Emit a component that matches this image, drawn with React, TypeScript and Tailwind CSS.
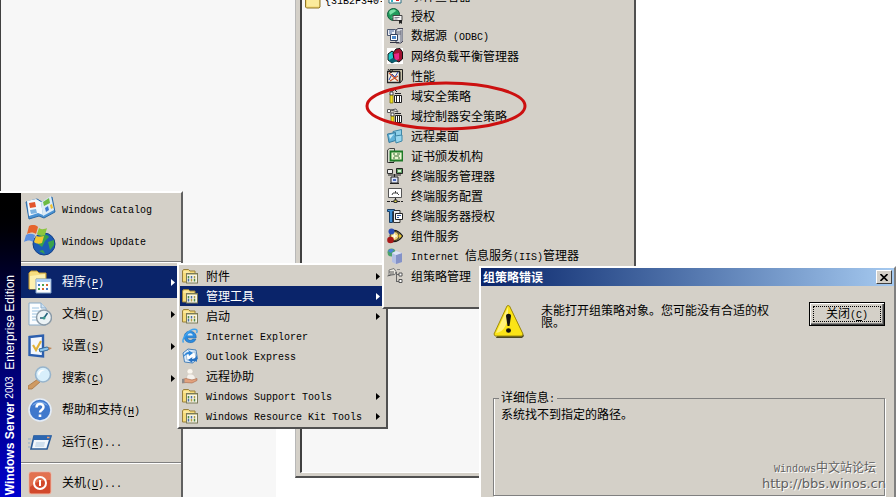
import React from 'react';

type IconProps = { children: React.ReactNode; className?: string; box?: number };

const Svg = ({ children, className = 'h-4 w-4', box = 16 }: IconProps) => (
  <svg viewBox={`0 0 ${box} ${box}`} className={`${className} shrink-0`} aria-hidden="true">
    {children}
  </svg>
);

// Latin runs use a half-width mono face, a single letter in brackets is the access key
const Label = ({ text }: { text: string }) => (
  <>
    {text.split(/([\x20-\x7e]+)/).map((part, i) => {
      if (!/^[\x20-\x7e]+$/.test(part)) return <React.Fragment key={i}>{part}</React.Fragment>;
      const key = part.match(/^\((\w)\)(.*)$/);
      return (
        <span key={i} className="font-['Liberation_Mono',monospace] text-[10px]">
          {key ? <>(<u className="underline-offset-2">{key[1]}</u>){key[2]}</> : part}
        </span>
      );
    })}
  </>
);

const Arrow = () => (
  <svg viewBox="0 0 4 7" className="ml-auto h-[7px] w-1 shrink-0 fill-current" aria-hidden="true">
    <path d="M0 0L4 3.5L0 7z" />
  </svg>
);

/* ---------- small icons ---------- */

const ProgramGroup = () => (
  <Svg>
    <path d="M.5 14V3l1-1.5h5L8 3h5v11z" fill="#f6dc7c" stroke="#98803c" />
    <path d="M1.5 4h5l2 2" fill="none" stroke="#fff6c4" />
    <rect x="4.5" y="5.500" width="11" height="9.500" fill="#f6f4e8" stroke="#7b7a58" />
    <path d="M5 6.500h10" stroke="#c9c494" />
    <path d="M6.500 8v2.500M12.500 11v2.500" stroke="#4d8a46" strokeWidth="1.500" />
    <path d="M9.500 8v2.500M6.500 11v2.500" stroke="#4c6fa0" strokeWidth="1.500" />
    <path d="M12.500 8v2.500M9.500 11v2.500" stroke="#b49a42" strokeWidth="1.500" />
  </Svg>
);

const Folder = () => (
  <Svg>
    <path d="M.5 14V3l1-1.500h5L8 3h7v11l-1 1H1.500z" fill="#f3d873" stroke="#8f7628" />
    <path d="M2 5.500h12v8H2z" fill="#fbeb9c" />
  </Svg>
);

const Explorer = () => (
  <Svg>
    <path d="M14.200 9.800H5.400c.3 3 4.400 3.200 5.300 1.200h3.200C12.500 16.400 2.300 16 2.300 8.800 2.300 1 14.700 1.200 14.200 9.800z" fill="#2b8ce0" stroke="#1462ad" strokeWidth=".6" />
    <path d="M5.500 7.500h5.300C10.500 4.600 5.900 4.600 5.500 7.500z" fill="#d4e8f8" />
    <path d="M1.500 14.500C-1 11 8-.5 14 1.500c1.500.6 1.200 2.300.5 3.500" fill="none" stroke="#3da2ee" strokeWidth="1.400" />
  </Svg>
);

const Outlook = () => (
  <Svg>
    <path d="M1 5l5-4 8 1 1.500 9-5 4-8-1z" fill="#dcebfa" stroke="#4a82b8" />
    <path d="M4 5l9-1 1 7-9 1z" fill="#fff" stroke="#7fa9d0" strokeWidth=".7" />
    <path d="M1 2v7c2-4 4-5 6-5l-1-2 5 3-4 3-.5-2C4 6.500 3 8 1 9" fill="#2f86d8" />
    <path d="M15 14V7c-1.500 3-3 4-5 4l.5-2L6 12l4.500 3-.2-2c2 0 3.500-.5 4.700 1z" fill="#2873c4" />
  </Svg>
);

const Assist = () => (
  <Svg>
    <circle cx="8" cy="3.500" r="3" fill="#fbf7f0" stroke="#cfc6ba" strokeWidth=".6" />
    <path d="M4.500 12c0-6 1.500-6 4-6s5 1 5 6z" fill="#f4f1ec" stroke="#c7beb2" strokeWidth=".6" />
    <path d="M0 11.500l4-1 6 1.500 5-1.500v2L10 15l-6-.5-4 .5z" fill="#e2a27e" stroke="#a8664a" strokeWidth=".6" />
    <path d="M0 11h2.500v4H0z" fill="#8e8b8b" />
  </Svg>
);

const EventViewer = () => (
  <Svg>
    <path d="M2 1h12v14H2z" fill="#fff" stroke="#2f6f80" />
    <path d="M4 8h2v2H4zM4 12h2v2H4z" fill="#30b0c0" />
    <path d="M9 10h3v3H9z" fill="#d02020" />
    <path d="M3 4h10" stroke="#405070" />
  </Svg>
);

const Licensing = () => (
  <Svg>
    <circle cx="6.500" cy="6.500" r="6" fill="#219a5c" stroke="#0e5c3a" />
    <path d="M2 4c2-3 6-3 7-1L6 5 3 7zM4 9l3-1 1 3z" fill="#7be0a8" />
    <path d="M6 7.500h9v5H6z" fill="#f4f4f4" stroke="#444" />
    <path d="M7.500 9.500h5M7.500 11h3" stroke="#667" strokeWidth=".8" />
    <path d="M12 12h3v4l-1.500-1L12 16z" fill="#222" />
  </Svg>
);

const DataSource = () => (
  <Svg>
    <path d="M9 2l2-1.500h5V13l-2 2H9z" fill="#d6dbe2" stroke="#445" />
    <path d="M10 4h4M10 6h4M14 2v12" stroke="#667" />
    <path d="M.5 1.500h8v6h-8z" fill="#eceef3" stroke="#4c5870" />
    <path d="M2 3h5M2 5h3" stroke="#4b689c" />
    <path d="M3.500 6.500h7v6h-7z" fill="#fff" stroke="#34425e" />
    <path d="M5 8h4v3H5z" fill="#4b86c8" />
    <path d="M3 14.500h9" stroke="#334" />
  </Svg>
);

const LoadBalance = () => (
  <Svg>
    <path d="M0 0h16v16H0z" fill="#fff" />
    <path d="M1 6l4-3 4 3v6l-4 3-4-3z" fill="#20c8c8" stroke="#111" />
    <path d="M6 5l3-4 4-.5L15.500 4v7L12 14 7 12z" fill="#a01030" stroke="#111" />
    <path d="M7 6l5-1v6l-4 2z" fill="#e82888" />
    <path d="M2 12l4-2 5 3-6 2z" fill="#0a5f70" />
  </Svg>
);

const Performance = () => (
  <Svg>
    <path d="M3 1.500h12.500V12L13 15V4H3z" fill="#c9c4ac" stroke="#222" />
    <path d="M.5 3.500h12v11H.5z" fill="#f7f2e4" stroke="#222" strokeWidth="1.300" />
    <path d="M2 12l3-6 3 3 3-5" fill="none" stroke="#2747b0" />
    <path d="M2 5l9 8M3 13l8-5" stroke="#c8522a" strokeWidth="1.200" />
    <path d="M1 1l3 4 2-4" stroke="#222" fill="none" />
  </Svg>
);

const DomainPolicy = () => (
  <Svg>
    <path d="M3 3h3l1-2 3 3" fill="none" stroke="#222" />
    <path d="M3 6.500h3V15H3z" fill="#f0e020" stroke="#7d7410" strokeWidth=".8" />
    <path d="M3 4h3v3H3z" fill="#fff" stroke="#222" strokeWidth=".8" />
    <path d="M7.500 7.500h7v7h-7z" fill="#fff" stroke="#222" />
    <path d="M9.500 8v6M12.500 8v6M8 5.500h6" stroke="#222" />
  </Svg>
);

const ControllerPolicy = () => (
  <Svg>
    <path d="M.5 1.500h3v3h-3zM4 2l5-1 2 3z" fill="#fff" stroke="#555" />
    <path d="M4 7.500h3V15H4z" fill="#f0e020" stroke="#7d7410" strokeWidth=".8" />
    <path d="M4 5h3v3H4z" fill="#fff" stroke="#222" strokeWidth=".8" />
    <path d="M8.500 7.500h6v7h-6z" fill="#fff" stroke="#222" />
    <path d="M10.500 8v6M12.500 8v6M8 5.500h6" stroke="#222" />
  </Svg>
);

const RemoteDesktop = () => (
  <Svg>
    <path d="M6 3.500L14.500 1.500v8L7 11z" fill="#8fd0e8" stroke="#3d87a8" />
    <path d="M.5 6l8-1.500v8L2 14.500z" fill="#62b2d8" stroke="#357b9f" />
    <path d="M8 8l7-1v6l-6 2z" fill="#98d6ee" stroke="#3d87a8" />
    <path d="M2 7l5-1-4 5z" fill="#c4ecf8" />
  </Svg>
);

const CertAuthority = () => (
  <Svg>
    <path d="M.5 2l2-1.500h5V13L6 14.500H.5z" fill="#d9ddd0" stroke="#444" />
    <path d="M3.500 3.500h12v9h-12z" fill="#e9f6cf" stroke="#1d7a26" strokeWidth="1.800" />
    <path d="M6 6h2M10 6h3M7 8h5M6 10h2M11 10h2" stroke="#386c36" />
    <path d="M2 14.500h5" stroke="#222" />
  </Svg>
);

const TerminalManager = () => (
  <Svg>
    <path d="M.5 1.500h5v4h-5z" fill="#eee" stroke="#333" />
    <path d="M9.500 .5h6v5h-6z" fill="#5d9e62" stroke="#222" />
    <path d="M11 2h3v2h-3z" fill="#d6f0d2" />
    <path d="M4 9h7v6H4z" fill="#dce3f7" stroke="#222" />
    <path d="M6 11h3v2H6z" fill="#4a68b8" />
    <path d="M7.500 9V6M1 7h13M3 15.500h9" stroke="#222" />
  </Svg>
);

const TerminalConfig = () => (
  <Svg>
    <path d="M1.500 .5h13v9h-13z" fill="#fff" stroke="#555" />
    <path d="M5 7l1-2M8.500 3v2M10 5l2 2M6 5h5" stroke="#444" />
    <path d="M8.500 10v3M0 13.500h3M4 13.500h9M14 13.500h2" stroke="#222" />
    <path d="M7 12h3v2.500H7z" fill="#e2d84a" stroke="#333" />
  </Svg>
);

const TerminalLicense = () => (
  <Svg>
    <path d="M.5 1.500h7v2h-2v11h-3v-11h-2z" fill="#3e8fd2" stroke="#173d66" />
    <path d="M7 2.500h6v12H6.500v-11z" fill="#e8ebf0" stroke="#333" />
    <path d="M8.500 5.500h7v6h-7z" fill="#fff" stroke="#222" />
    <path d="M10 7.500h4M10 9.500h2" stroke="#385a94" />
  </Svg>
);

const ComponentServices = () => (
  <Svg>
    <path d="M5 2.500c5-1 8 2 10.500 5.500C13 12 10 14 5 13.500z" fill="#c8b878" stroke="#1a1a1a" strokeWidth="1.300" />
    <circle cx="7.500" cy="8" r="4.500" fill="#e8cc70" stroke="#2a2410" />
    <circle cx="4.500" cy="3.500" r="3" fill="#2a4cb4" />
    <circle cx="3.500" cy="12" r="3.300" fill="#a81818" />
    <path d="M5 8h5M7.500 5.500v5" stroke="#fffbe0" strokeWidth="1.600" />
    <circle cx="13" cy="8" r="1.500" fill="#e6c430" />
  </Svg>
);

const IisManager = () => (
  <Svg>
    <circle cx="4.500" cy="4.500" r="4" fill="#4aa26c" />
    <path d="M1 3c2-3 5-2 6-1L4 5z" fill="#4c82d8" />
    <path d="M5 5l4-2 6 2v9l-6 2-4-2z" fill="#b4c0e4" />
    <path d="M9 7l6-2v9l-6 2z" fill="#8492c8" />
    <path d="M5 5l4-2 6 2-6 2z" fill="#dde4f6" />
  </Svg>
);

const GroupPolicy = () => (
  <Svg>
    <path d="M2 2l5-1.500 2 3-1 3-6 1z" fill="#eceae2" stroke="#777" />
    <path d="M2 4h5M3 6h4M.5 8l3-1" stroke="#555" />
    <path d="M9.500 4v10M9.500 6.500h3M9.500 13.500h3" stroke="#666" fill="none" />
    <path d="M12 5h3v3h-3zM12 11.500h3v3h-3z" fill="#fff" stroke="#555" />
    <path d="M10 1.500h3" stroke="#888" />
  </Svg>
);

/* ---------- start menu icons ---------- */

const Catalog = () => (
  <Svg box={32} className="h-8 w-8">
    <path d="M2 9l11-3 5 3 10-5 3 15-11 6-5-2-10 3z" fill="#4c94d4" stroke="#2c6aa6" />
    <path d="M3 8l9-2 5 3 2 13-5-2-9 3z" fill="#f2f8fd" />
    <path d="M17 9l10-6 3 14-11 6z" fill="#dcebf6" />
    <path d="M5 10l6-1 1 5-6 1z" fill="#e2552e" />
    <path d="M6 17l6-1 1 4-6 1z" fill="#7db3e0" />
    <path d="M19 9l6-4 1 5-6 3z" fill="#6cbb45" />
    <path d="M21 15l3-2 1 4-3 2z" fill="#3c78d0" />
    <path d="M26 12l2-1 1 4-2 1z" fill="#f0c030" />
  </Svg>
);

const Update = () => (
  <Svg box={32} className="h-8 w-8">
    <circle cx="20" cy="19" r="11" fill="#1c5cb4" stroke="#123f86" />
    <path d="M14 13c4-4 9-4 11-1l-4 4-3 6-4-3zM24 17l6-2v5l-4 5zM15 26l4-1 2 4z" fill="#39a24a" />
    <path d="M5 1c4-2 7-1 9 1l-2 7C9 7 7 7 3 9z" fill="#e6642c" />
    <path d="M15 3c3 2 6 1 8 0l-2 7c-3 1-6 1-8-1z" fill="#8cc63e" />
    <path d="M2 10c3-2 6-1 9 0l-2 7c-3-2-5-2-9 0z" fill="#5a8ee0" />
    <path d="M12 11c3 1 5 1 8 0l-2 7c-3 1-6 1-8-1z" fill="#f4c832" />
  </Svg>
);

const Programs = () => (
  <Svg box={24} className="h-6 w-6">
    <path d="M1 19V3l2-2h6l2 2h7v16z" fill="#f7dd80" stroke="#c19a36" />
    <path d="M2 6l8-1 7-1v4H8v11H2z" fill="#fdf0b0" />
    <path d="M8 9h15v14H8z" fill="#fbfcfe" stroke="#7d9ec6" />
    <path d="M8.500 9h14v3h-14z" fill="#a9cdf4" />
    <path d="M10 14h2v2h-2zM18 18h2v2h-2z" fill="#3e78c4" />
    <path d="M14 14h2v2h-2zM10 18h2v2h-2z" fill="#48a04e" />
    <path d="M18 14h2v2h-2zM14 18h2v2h-2z" fill="#d6642e" />
  </Svg>
);

const Documents = () => (
  <Svg box={24} className="h-6 w-6">
    <path d="M1 1h12l5 5v17H1z" fill="#fbfdff" stroke="#88abc9" />
    <path d="M13 1v5h5" fill="#cfe2f2" stroke="#88abc9" />
    <path d="M4 6h7M4 9h10M4 12h6M4 15h4M4 18h4" stroke="#9cc3e2" />
    <circle cx="16" cy="15.500" r="7.500" fill="#ecf3f6" stroke="#8b9ba8" strokeWidth="1.500" />
    <path d="M19.500 11L16 16h-4" fill="none" stroke="#23607c" strokeWidth="1.600" />
    <circle cx="16" cy="16" r="1.500" fill="#3c9a8c" />
  </Svg>
);

const Settings = () => (
  <Svg box={24} className="h-6 w-6">
    <path d="M1.500 3L15 1.500v21L1.500 21z" fill="#f4f8fe" stroke="#2c5fae" strokeWidth="2.400" />
    <path d="M5 11l3 5 5-9" fill="none" stroke="#e2b33a" strokeWidth="2.200" />
    <path d="M11 15l8-2 2 1-1 2-8 2z" fill="#8cc4ec" stroke="#346a9c" />
    <path d="M20 13l4 1-3 2z" fill="#c08452" />
  </Svg>
);

const Search = () => (
  <Svg box={24} className="h-6 w-6">
    <path d="M10 13l2 3-8 7H0v-3z" fill="#cf9a62" stroke="#a67544" strokeWidth=".8" />
    <circle cx="15" cy="8.500" r="7.500" fill="#d8effb" stroke="#97b4cc" strokeWidth="1.600" />
    <path d="M10 8c0-4 5-5 7-4-4 1-5 3-6 6z" fill="#fff" />
  </Svg>
);

const Help = () => (
  <Svg box={24} className="h-6 w-6">
    <circle cx="12" cy="12" r="11" fill="#3f78cc" stroke="#e4edf8" strokeWidth="1.600" />
    <path d="M4 8c3-6 13-6 16 0-5-3-11-3-16 0z" fill="#79a8e6" />
    <path d="M8.500 9.500C8.500 5 15.500 5 15.500 9c0 3-3.500 3-3.500 5.500" fill="none" stroke="#fff" strokeWidth="2.500" />
    <path d="M10.700 16.500h2.600V19h-2.600z" fill="#fff" />
  </Svg>
);

const Run = () => (
  <Svg box={24} className="h-6 w-6">
    <path d="M6 6h17l-4 13H3z" fill="#f2f7fb" stroke="#2a5c98" strokeWidth="1.600" />
    <path d="M6 5.500h17.500L22 10H5z" fill="#2c66b0" />
    <path d="M19 7.500h2.500" stroke="#f0a070" strokeWidth="1.500" />
    <path d="M0 9h3M0 13h2M0 17h2" stroke="#8cabc9" />
    <path d="M8 12h9l-1 5H7z" fill="#cfe0ee" />
  </Svg>
);

const Shutdown = () => (
  <Svg box={24} className="h-6 w-6">
    <rect x="1" y="1" width="22" height="22" rx="2" fill="#d2492c" stroke="#f2b8a4" />
    <path d="M2 2h20v7C14 9 8 11 2 16z" fill="#e2714f" />
    <circle cx="12" cy="12" r="6" fill="none" stroke="#fff" strokeWidth="2" />
    <path d="M12 9v6" stroke="#fff" strokeWidth="2" />
  </Svg>
);

/* ---------- data ---------- */

type Item = { icon: React.ReactNode; text: string; sub?: boolean; active?: boolean };

const adminTools: Item[] = [
  { icon: <EventViewer />, text: '事件查看器' },
  { icon: <Licensing />, text: '授权' },
  { icon: <DataSource />, text: '数据源 (ODBC)' },
  { icon: <LoadBalance />, text: '网络负载平衡管理器' },
  { icon: <Performance />, text: '性能' },
  { icon: <DomainPolicy />, text: '域安全策略' },
  { icon: <ControllerPolicy />, text: '域控制器安全策略' },
  { icon: <RemoteDesktop />, text: '远程桌面' },
  { icon: <CertAuthority />, text: '证书颁发机构' },
  { icon: <TerminalManager />, text: '终端服务管理器' },
  { icon: <TerminalConfig />, text: '终端服务配置' },
  { icon: <TerminalLicense />, text: '终端服务器授权' },
  { icon: <ComponentServices />, text: '组件服务' },
  { icon: <IisManager />, text: 'Internet 信息服务(IIS)管理器' },
  { icon: <GroupPolicy />, text: '组策略管理' },
];

const programs: Item[] = [
  { icon: <ProgramGroup />, text: '附件', sub: true },
  { icon: <ProgramGroup />, text: '管理工具', sub: true, active: true },
  { icon: <ProgramGroup />, text: '启动', sub: true },
  { icon: <Explorer />, text: 'Internet Explorer' },
  { icon: <Outlook />, text: 'Outlook Express' },
  { icon: <Assist />, text: '远程协助' },
  { icon: <ProgramGroup />, text: 'Windows Support Tools', sub: true },
  { icon: <ProgramGroup />, text: 'Windows Resource Kit Tools', sub: true },
];

const startGroups: Item[][] = [
  [
    { icon: <Catalog />, text: 'Windows Catalog' },
    { icon: <Update />, text: 'Windows Update' },
  ],
  [
    { icon: <Programs />, text: '程序(P)', sub: true, active: true },
    { icon: <Documents />, text: '文档(D)', sub: true },
    { icon: <Settings />, text: '设置(S)', sub: true },
    { icon: <Search />, text: '搜索(C)', sub: true },
    { icon: <Help />, text: '帮助和支持(H)' },
    { icon: <Run />, text: '运行(R)...' },
  ],
  [{ icon: <Shutdown />, text: '关机(U)...' }],
];

/* ---------- menus ---------- */

const Menu = ({ items, className }: { items: Item[]; className: string }) => (
  <ul
    className={`absolute border-2 border-t-white border-l-white border-r-[#505050] border-b-[#505050] bg-[#d4d0c8] p-px ${className}`}
  >
    {items.map((item) => (
      <li key={item.text}>
        <button
          className={`flex h-5 w-full items-center gap-2 pr-[5px] pl-[2px] text-left ${
            item.active ? 'bg-[#0a246a] text-white' : ''
          }`}
        >
          {item.icon}
          <span><Label text={item.text} /></span>
          {item.sub && <Arrow />}
        </button>
      </li>
    ))}
  </ul>
);

const StartMenu = () => (
  <nav className="absolute top-[191px] left-0 flex w-[183px] border-t-2 border-r-2 border-t-white border-r-[#606060] bg-[#d4d0c8]">
    <div className="flex w-[21px] items-center bg-linear-to-b from-black via-[#000050] via-40% to-[#0000d0]">
      <p className="mt-auto mb-1 w-[21px] rotate-180 font-['Liberation_Sans',sans-serif] text-[12px] leading-5 text-white [writing-mode:vertical-rl]">
        <b>Windows Server</b> <span className="text-[10px]">2003</span>{'  '}Enterprise Edition
      </p>
    </div>
    <div className="min-w-0 flex-1">
      {startGroups.map((group, i) => (
        <ul key={i} className={i > 0 ? 'mt-1 border-t border-[#808080] pt-1 shadow-[inset_0_1px_0_#fff]' : ''}>
          {group.map((item) => (
            <li key={item.text}>
              <button
                className={`flex h-8 w-full items-center pr-[6px] text-left ${
                  item.active ? 'bg-[#0a246a] text-white' : ''
                }`}
              >
                <span className="mr-1 flex w-[37px] shrink-0 justify-center">{item.icon}</span>
                <span><Label text={item.text} /></span>
                {item.sub && <Arrow />}
              </button>
            </li>
          ))}
        </ul>
      ))}
    </div>
  </nav>
);

const ErrorDialog = () => (
  <section
    role="dialog"
    aria-label="组策略错误"
    className="absolute top-[266px] right-0 -bottom-3 left-[479px] flex flex-col border-2 border-t-white border-l-white border-r-[#808080] border-b-[#808080] bg-[#d4d0c8]"
  >
    <header className="flex h-[18px] shrink-0 items-center justify-between bg-linear-to-r from-[#0a246a] to-[#a6caf0] pr-[2px] pl-[2px]">
      <h1 className="font-bold text-white">组策略错误</h1>
      <button
        aria-label="Close"
        className="flex h-[14px] w-4 items-center justify-center border border-t-white border-l-white border-r-[#404040] border-b-[#404040] bg-[#d4d0c8]"
      >
        <svg viewBox="0 0 8 7" className="h-[7px] w-2" aria-hidden="true">
          <path d="M.5 0l7 7M7.500 0l-7 7" stroke="#000" strokeWidth="1.600" />
        </svg>
      </button>
    </header>
    <div className="flex items-start pt-4 pr-[9px] pl-3">
      <svg viewBox="0 0 32 34" className="mt-[2px] h-[34px] w-8 shrink-0" aria-hidden="true">
        <path d="M17 3l14 29-2 2H3z" fill="#4b4824" />
        <path d="M15 1.500l1.500 .5L30 30l-1 2H2l-1-2L14 2z" fill="#fbe416" stroke="#a08c10" />
        <path d="M15 3L3 29c8-1 13-9 12-26z" fill="#fff27a" />
        <path d="M13 12c0-3 5-3 5 0l-1.500 10h-2z" fill="#111" />
        <ellipse cx="15.500" cy="26.500" rx="2.500" ry="2.200" fill="#111" />
      </svg>
      <p className="mt-[2px] ml-4 w-[232px] leading-3 whitespace-normal">未能打开组策略对象。您可能没有合适的权限。</p>
      <button className="ml-auto h-6 w-[76px] border border-black p-0 shadow-[inset_1px_1px_0_#fff,inset_-1px_-1px_0_#404040,inset_-2px_-2px_0_#808080]">
        <span className="m-[3px] flex h-4 items-center justify-center border border-dotted border-black">
          <span><Label text="关闭(C)" /></span>
        </span>
      </button>
    </div>
    <fieldset className="mx-3 mt-[51px] mr-[9px] h-[107px] border border-[#808080] px-[7px] shadow-[inset_1px_0_0_#fff,1px_1px_0_#fff]">
      <legend className="-ml-[2px] px-[2px] leading-4">详细信息<Label text=":" /></legend>
      <p className="leading-3">系统找不到指定的路径。</p>
    </fieldset>
  </section>
);

const App = () => (
  <main className="relative h-screen overflow-hidden bg-white font-['Noto_Sans_CJK_SC',sans-serif] text-[12px] leading-4 whitespace-pre text-black">
    {/* Windows behind the menus */}
    <div className="absolute inset-y-0 left-0 w-[276px] bg-[#f7f7f7]" />
    <div className="absolute top-0 left-0 h-[264px] w-[295px] border-l border-[#404040] bg-[#f7f7f7]" />
    <div className="absolute -top-3 left-[295px] h-[490px] w-[330px] border-b-2 border-l border-b-[#505050] border-l-[#b8b8b8] bg-[#d4d0c8] pb-[3px] pl-1">
      <div className="h-full border-b border-l-2 border-b-white border-l-[#404040] bg-[#f7f7f7] pt-[3px] pl-[3px]">
        <div className="flex items-center gap-1">
          <Folder />
          <span><Label text="{31B2F340-" /></span>
        </div>
      </div>
    </div>

    <StartMenu />
    <Menu items={programs} className="top-[263px] left-[177px] w-[211px]" />
    <Menu items={adminTools} className="-top-[17px] left-[382px] h-[326px] w-[254px]" />

    {/* Red marker around the two security policy entries */}
    <svg viewBox="0 0 162 50" className="absolute top-[81px] left-[365px] h-[50px] w-[162px]" aria-hidden="true">
      <ellipse cx="81" cy="25" rx="79" ry="23" fill="none" stroke="#cc1010" strokeWidth="3" />
    </svg>

    <ErrorDialog />

    <footer className="absolute right-[10px] bottom-[5px] flex flex-col items-end text-[#606060] [text-shadow:1px_1px_0_#fff]">
      <span className="pr-[10px] leading-3"><Label text="Windows中文站论坛" /></span>
      <a href="http://bbs.winos.cn" className="font-['DejaVu_Sans',sans-serif] text-[13px] leading-4">http://bbs.winos.cn</a>
    </footer>
  </main>
);

export default App;
